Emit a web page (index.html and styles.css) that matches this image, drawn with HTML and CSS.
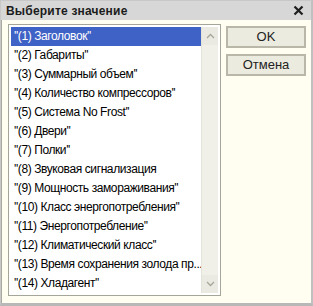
FILE: index.html
```
<html>
    <head>
        <link rel="stylesheet" href="styles.css">
    </head>
    <body>
        <div class="window">
            <div class="caption">
                <span class="caption-text">Выберите значение</span>
                <svg class="close" width="11" height="11" viewBox="0 0 11 11"><path d="M1.5 1.5 L9.5 9.5 M9.5 1.5 L1.5 9.5" stroke="#1e1e1e" stroke-width="2.2"/></svg>
            </div>
            <div class="body">
                <div class="listbox">
                    <div class="items">
                        <div class="item selected">''(1) Заголовок''</div>
                        <div class="item">''(2) Габариты''</div>
                        <div class="item">''(3) Суммарный объем''</div>
                        <div class="item">''(4) Количество компрессоров''</div>
                        <div class="item">''(5) Система No Frost''</div>
                        <div class="item">''(6) Двери''</div>
                        <div class="item">''(7) Полки''</div>
                        <div class="item">''(8) Звуковая сигнализация</div>
                        <div class="item">''(9) Мощность замораживания''</div>
                        <div class="item">''(10) Класс энергопотребления''</div>
                        <div class="item">''(11) Энергопотребление''</div>
                        <div class="item">''(12) Климатический класс''</div>
                        <div class="item">''(13) Время сохранения золода пр...</div>
                        <div class="item">''(14) Хладагент''</div>
                    </div>
                    <div class="scrollbar">
                        <div class="arrow">
                            <svg width="9" height="6" viewBox="0 0 9 6"><path d="M1 5 L4.5 1.5 L8 5" fill="none" stroke="#a8a699" stroke-width="1.3"/></svg>
                        </div>
                        <div class="track"></div>
                        <div class="arrow">
                            <svg width="9" height="6" viewBox="0 0 9 6"><path d="M1 1 L4.5 4.5 L8 1" fill="none" stroke="#a8a699" stroke-width="1.3"/></svg>
                        </div>
                    </div>
                </div>
                <div class="buttons">
                    <div class="button">OK</div>
                    <div class="button">Отмена</div>
                </div>
            </div>
        </div>
    </body>
</html>
```
FILE: styles.css
```
html, body {
    margin: 0;
    padding: 0;
}

body {
    background-color: #fff;
    font-family: "Liberation Sans", Arial, sans-serif;
}

.window {
    box-sizing: border-box;
    width: 313px;
    height: 306px;
    display: flex;
    flex-direction: column;
    background-color: #d6d6d6;
    border: 1px solid #c8c8c8;
    border-bottom: 3px solid #b8b8b8;
    border-right: 2px solid #c0c0c0;
}

.caption {
    height: 20px;
    display: flex;
    align-items: center;
    padding: 0 7px 0 5px;
    background-color: #d7d7d7;
}
.caption-text {
    flex-grow: 1;
    font-size: 12px;
    font-weight: bold;
    color: #1c1c1c;
    letter-spacing: 0.2px;
}

.body {
    flex-grow: 1;
    display: flex;
    gap: 5px;
    padding: 4px 8px 7px 6px;
    background-color: #fffef0;
    border-left: 1px solid #a9a9a0;
}

.listbox {
    box-sizing: border-box;
    width: 213px;
    display: flex;
    padding: 2px;
    background-color: #fff;
    border: 1px solid #a5a59a;
}
.items {
    flex-grow: 1;
    overflow: hidden;
}
.item {
    height: 19px;
    line-height: 19px;
    padding-left: 3px;
    font-size: 12px;
    letter-spacing: -0.4px;
    color: #000;
    white-space: nowrap;
}
.item.selected {
    background-color: #3f62c6;
    color: #fff;
}

.scrollbar {
    width: 16px;
    display: flex;
    flex-direction: column;
    background-color: #f1f0e8;
    border-left: 1px solid #e4e3da;
}
.scrollbar .track {
    flex-grow: 1;
}
.scrollbar .arrow {
    height: 18px;
    display: flex;
    align-items: center;
    justify-content: center;
    background-color: #ebeae2;
}

.buttons {
    display: flex;
    flex-direction: column;
    gap: 6px;
    padding-top: 2px;
}
.button {
    box-sizing: border-box;
    width: 80px;
    height: 22px;
    line-height: 18px;
    text-align: center;
    font-size: 13px;
    color: #222;
    background-color: #ecebe0;
    border: 2px solid #b9b7a7;
}
```
